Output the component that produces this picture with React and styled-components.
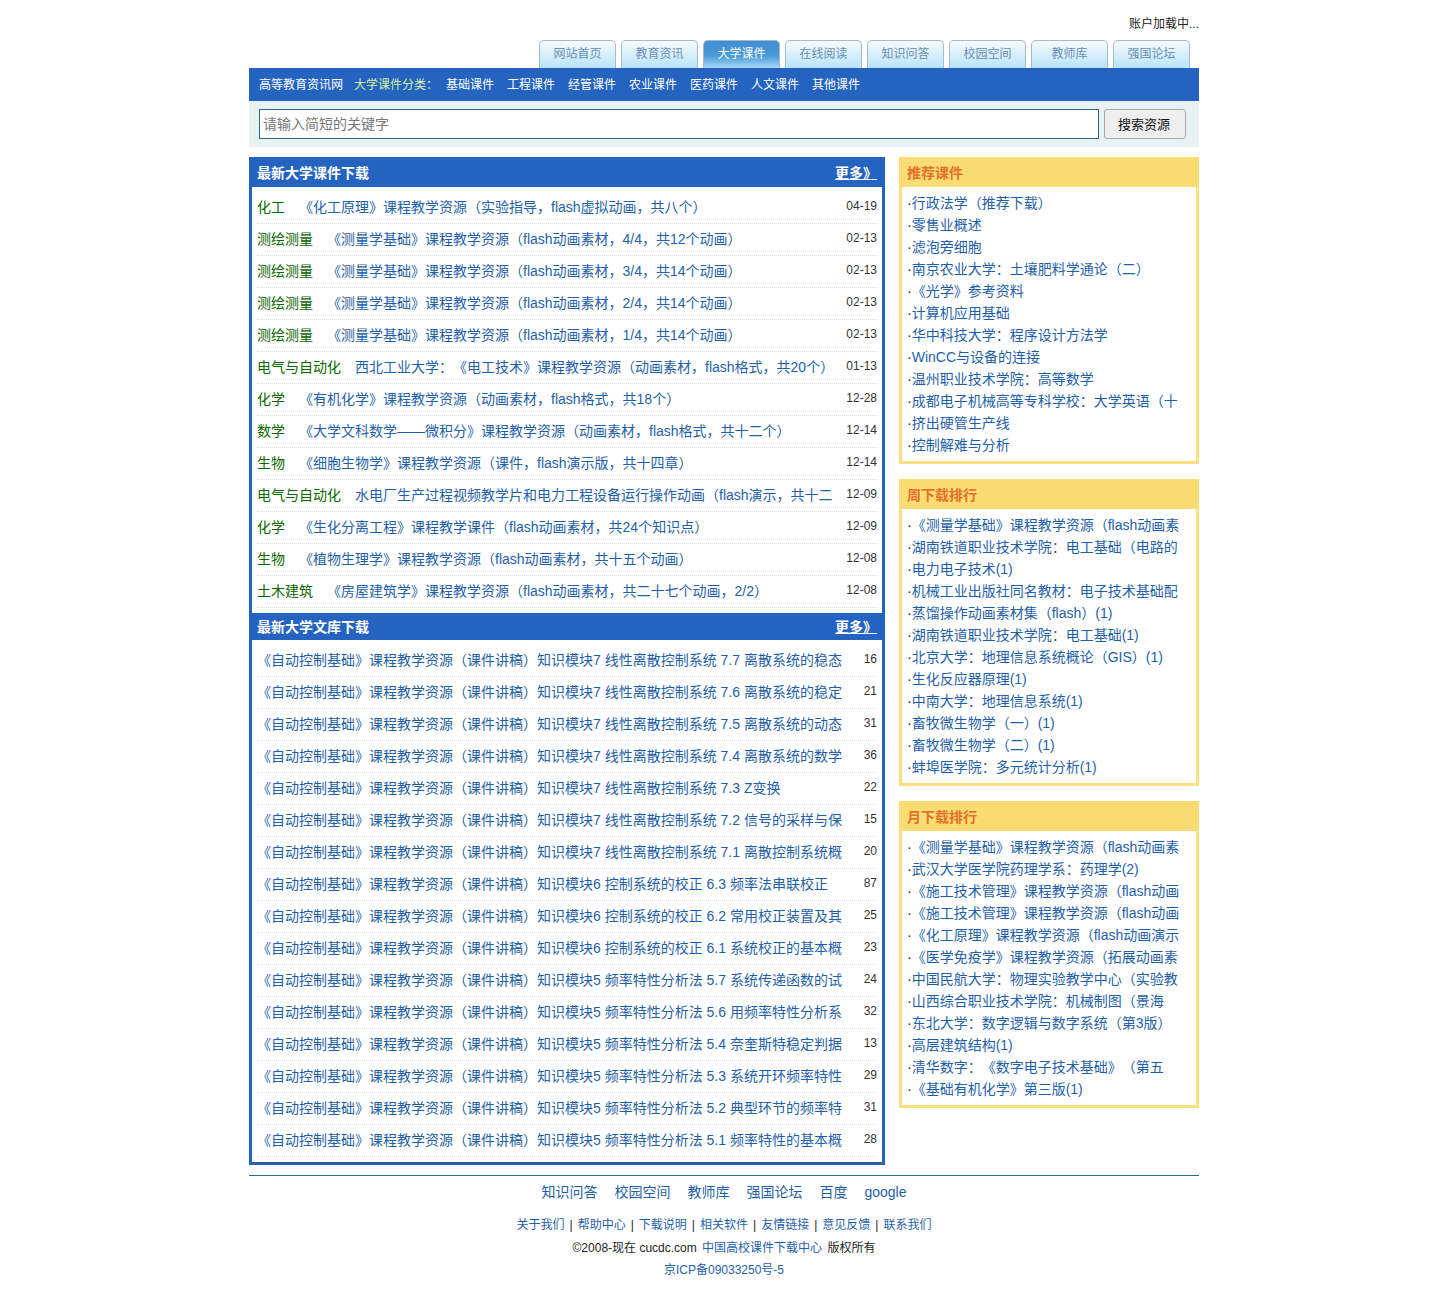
import React from "react";
import styled, { createGlobalStyle } from "styled-components";

//Styles
const GlobalStyle = createGlobalStyle`
	body {
		margin: 0;
		background: #fff;
		font-family: "Liberation Sans", "Noto Sans CJK SC", sans-serif;
		font-size: 12px;
		color: #222;
		text-spacing-trim: space-all;
	}
	a {
		color: #1f5fa8;
		text-decoration: none;
	}
`;

const Page = styled.div`
	width: 950px;
	height: 1297px;
	margin-left: 249px;
`;

const Account = styled.div`
	height: 40px;
	padding-top: 16px;
	box-sizing: border-box;
	line-height: 16px;
	text-align: right;
	color: #222;
`;

const Tabs = styled.div`
	display: flex;
	justify-content: flex-end;
	gap: 5px;
	height: 28px;
	padding-right: 9px;
`;

const Tab = styled.a`
	display: block;
	box-sizing: border-box;
	width: 77px;
	height: 28px;
	line-height: 26px;
	text-align: center;
	border: 1px solid #a3bccb;
	border-bottom: 0;
	border-radius: 5px 5px 0 0;
	color: ${(p) => (p.$active ? "#fff" : "#6b8fb0")};
	background: ${(p) =>
		p.$active
			? "linear-gradient(#3f8ed2 0%, #4a9ad8 55%, #a5daf5 100%)"
			: "linear-gradient(#f7fbfe, #b9e3f9)"};
`;

const NavBar = styled.div`
	display: flex;
	align-items: center;
	box-sizing: border-box;
	height: 33px;
	padding: 0 0 3px 10px;
	background: #2563c0;
	color: #fff;
`;

const SiteName = styled.span`
	width: 95px;
`;

const NavLabel = styled.span`
	width: 92px;
	color: #d8f0a8;
`;

const NavLink = styled.a`
	margin-right: 13px;
	color: #fff;
`;

const SearchBar = styled.div`
	display: flex;
	align-items: center;
	gap: 5px;
	height: 46px;
	padding: 0 13px 0 10px;
	background: #e9f2f2;
`;

const SearchInput = styled.input`
	flex: 1;
	box-sizing: border-box;
	height: 30px;
	padding: 0 3px;
	border: 1px solid #2f6488;
	border-radius: 0;
	background: #fff;
	font: 14px "Liberation Sans", "Noto Sans CJK SC", sans-serif;
	outline: none;
	&::placeholder {
		color: #777;
		opacity: 1;
	}
`;

const SearchButton = styled.button`
	width: 82px;
	height: 30px;
	padding: 0 2px 2px 0;
	border: 1px solid #aaa;
	border-radius: 3px;
	background: #efefef;
	color: #111;
	font: 13px "Liberation Sans", "Noto Sans CJK SC", sans-serif;
`;

const Columns = styled.div`
	display: flex;
	justify-content: space-between;
	align-items: flex-start;
	margin-top: 10px;
`;

const MainPanel = styled.div`
	box-sizing: border-box;
	width: 636px;
	height: 1008px;
	border: 3px solid #2563c0;
	border-top: 0;
	border-bottom-color: #2a62ac;
`;

const MainHead = styled.div`
	display: flex;
	justify-content: space-between;
	align-items: center;
	box-sizing: border-box;
	height: ${(p) => p.$height}px;
	margin: 0 -3px;
	padding: 0 8px ${(p) => (p.$height < 30 ? 2 : 0)}px;
	background: #2563c0;
	color: #fff;
	font-size: 14px;
	font-weight: bold;
`;

const More = styled.a`
	color: #fff;
	text-decoration: underline;
	font-size: 14px;
`;

const RowList = styled.ul`
	margin: 0;
	padding: 5px 5px 5px;
	list-style: none;
`;

const Row = styled.li`
	display: flex;
	align-items: center;
	box-sizing: border-box;
	height: 32px;
	padding-bottom: 4px;
	border-bottom: 1px dotted #ddd;
	font-size: 14px;
`;

const Subject = styled.a`
	margin-right: 14px;
	color: #0a6600;
	white-space: nowrap;
`;

const RowTitle = styled.a`
	flex: 1;
	white-space: nowrap;
	overflow: hidden;
`;

const RowMeta = styled.span`
	margin-left: 8px;
	font-size: 12px;
	color: #333;
	white-space: nowrap;
`;

const Sidebar = styled.div`
	display: flex;
	flex-direction: column;
	gap: 15px;
	width: 300px;
`;

const SideBox = styled.div`
	border: 3px solid #fbe083;
	border-top: 0;
	padding-bottom: 5px;
`;

const SideHead = styled.div`
	height: 30px;
	margin: 0 -3px;
	padding-left: 8px;
	line-height: 32px;
	background: #f9dc72;
	color: #e4702c;
	font-size: 14px;
	font-weight: bold;
`;

const SideList = styled.ul`
	margin: 0;
	padding: 5px 5px 0;
	list-style: none;
`;

const SideItem = styled.li`
	height: 22px;
	line-height: 22px;
	font-size: 14px;
	white-space: nowrap;
	overflow: hidden;
`;

const Footer = styled.div`
	margin-top: 10px;
	border-top: 1px solid #2f6a9c;
	text-align: center;
`;

const FooterLinks = styled.div`
	display: flex;
	justify-content: center;
	gap: 17px;
	padding-top: 8px;
	line-height: 16px;
	font-size: 14px;
`;

const FooterLine = styled.div`
	margin-top: ${(p) => p.$top}px;
	line-height: 16px;
	color: #222;
`;

const Separator = styled.span`
	margin: 0 5px;
`;

const OwnerLink = styled.a`
	margin: 0 2px;
`;

//Misc computation tasks
const tabs = ["网站首页", "教育资讯", "大学课件", "在线阅读", "知识问答", "校园空间", "教师库", "强国论坛"];
const categories = ["基础课件", "工程课件", "经管课件", "农业课件", "医药课件", "人文课件", "其他课件"];

const courses = [
	["化工", "《化工原理》课程教学资源（实验指导，flash虚拟动画，共八个）", "04-19"],
	["测绘测量", "《测量学基础》课程教学资源（flash动画素材，4/4，共12个动画）", "02-13"],
	["测绘测量", "《测量学基础》课程教学资源（flash动画素材，3/4，共14个动画）", "02-13"],
	["测绘测量", "《测量学基础》课程教学资源（flash动画素材，2/4，共14个动画）", "02-13"],
	["测绘测量", "《测量学基础》课程教学资源（flash动画素材，1/4，共14个动画）", "02-13"],
	["电气与自动化", "西北工业大学：《电工技术》课程教学资源（动画素材，flash格式，共20个）", "01-13"],
	["化学", "《有机化学》课程教学资源（动画素材，flash格式，共18个）", "12-28"],
	["数学", "《大学文科数学——微积分》课程教学资源（动画素材，flash格式，共十二个）", "12-14"],
	["生物", "《细胞生物学》课程教学资源（课件，flash演示版，共十四章）", "12-14"],
	["电气与自动化", "水电厂生产过程视频教学片和电力工程设备运行操作动画（flash演示，共十二", "12-09"],
	["化学", "《生化分离工程》课程教学课件（flash动画素材，共24个知识点）", "12-09"],
	["生物", "《植物生理学》课程教学资源（flash动画素材，共十五个动画）", "12-08"],
	["土木建筑", "《房屋建筑学》课程教学资源（flash动画素材，共二十七个动画，2/2）", "12-08"],
];

const docs = [
	["知识模块7 线性离散控制系统 7.7 离散系统的稳态", 16],
	["知识模块7 线性离散控制系统 7.6 离散系统的稳定", 21],
	["知识模块7 线性离散控制系统 7.5 离散系统的动态", 31],
	["知识模块7 线性离散控制系统 7.4 离散系统的数学", 36],
	["知识模块7 线性离散控制系统 7.3 Z变换", 22],
	["知识模块7 线性离散控制系统 7.2 信号的采样与保", 15],
	["知识模块7 线性离散控制系统 7.1 离散控制系统概", 20],
	["知识模块6 控制系统的校正 6.3 频率法串联校正", 87],
	["知识模块6 控制系统的校正 6.2 常用校正装置及其", 25],
	["知识模块6 控制系统的校正 6.1 系统校正的基本概", 23],
	["知识模块5 频率特性分析法 5.7 系统传递函数的试", 24],
	["知识模块5 频率特性分析法 5.6 用频率特性分析系", 32],
	["知识模块5 频率特性分析法 5.4 奈奎斯特稳定判据", 13],
	["知识模块5 频率特性分析法 5.3 系统开环频率特性", 29],
	["知识模块5 频率特性分析法 5.2 典型环节的频率特", 31],
	["知识模块5 频率特性分析法 5.1 频率特性的基本概", 28],
];

const sideBoxes = [
	{
		title: "推荐课件",
		items: ["行政法学（推荐下载）", "零售业概述", "滤泡旁细胞", "南京农业大学：土壤肥料学通论（二）", "《光学》参考资料", "计算机应用基础", "华中科技大学：程序设计方法学", "WinCC与设备的连接", "温州职业技术学院：高等数学", "成都电子机械高等专科学校：大学英语（十", "挤出硬管生产线", "控制解难与分析"],
	},
	{
		title: "周下载排行",
		items: ["《测量学基础》课程教学资源（flash动画素", "湖南铁道职业技术学院：电工基础（电路的", "电力电子技术(1)", "机械工业出版社同名教材：电子技术基础配", "蒸馏操作动画素材集（flash）(1)", "湖南铁道职业技术学院：电工基础(1)", "北京大学：地理信息系统概论（GIS）(1)", "生化反应器原理(1)", "中南大学：地理信息系统(1)", "畜牧微生物学（一）(1)", "畜牧微生物学（二）(1)", "蚌埠医学院：多元统计分析(1)"],
	},
	{
		title: "月下载排行",
		items: ["《测量学基础》课程教学资源（flash动画素", "武汉大学医学院药理学系：药理学(2)", "《施工技术管理》课程教学资源（flash动画", "《施工技术管理》课程教学资源（flash动画", "《化工原理》课程教学资源（flash动画演示", "《医学免疫学》课程教学资源（拓展动画素", "中国民航大学：物理实验教学中心（实验教", "山西综合职业技术学院：机械制图（景海", "东北大学：数字逻辑与数字系统（第3版）", "高层建筑结构(1)", "清华数字：《数字电子技术基础》（第五", "《基础有机化学》第三版(1)"],
	},
];

const footerLinks = ["知识问答", "校园空间", "教师库", "强国论坛", "百度", "google"];
const helpLinks = ["关于我们", "帮助中心", "下载说明", "相关软件", "友情链接", "意见反馈", "联系我们"];

//Start of Component Functionality
const App = () => {
	return (
		<Page>
			<GlobalStyle />
			<Account>账户加载中...</Account>
			<Tabs>
				{tabs.map((tab) => (
					<Tab key={tab} href="#" $active={tab === "大学课件"}>
						{tab}
					</Tab>
				))}
			</Tabs>
			<NavBar>
				<SiteName>高等教育资讯网</SiteName>
				<NavLabel>大学课件分类：</NavLabel>
				{categories.map((item) => (
					<NavLink key={item} href="#">
						{item}
					</NavLink>
				))}
			</NavBar>
			<SearchBar>
				<SearchInput placeholder="请输入简短的关键字" />
				<SearchButton>搜索资源</SearchButton>
			</SearchBar>

			<Columns>
				<MainPanel>
					<MainHead $height={30}>
						最新大学课件下载
						<More href="#">更多》 </More>
					</MainHead>
					<RowList>
						{courses.map(([subject, title, date], i) => (
							<Row key={i}>
								<Subject href="#">{subject}</Subject>
								<RowTitle href="#">{title}</RowTitle>
								<RowMeta>{date}</RowMeta>
							</Row>
						))}
					</RowList>
					<MainHead $height={27}>
						最新大学文库下载
						<More href="#">更多》 </More>
					</MainHead>
					<RowList>
						{docs.map(([title, count], i) => (
							<Row key={i}>
								<RowTitle href="#">《自动控制基础》课程教学资源（课件讲稿）{title}</RowTitle>
								<RowMeta>{count}</RowMeta>
							</Row>
						))}
					</RowList>
				</MainPanel>

				<Sidebar>
					{sideBoxes.map((box) => (
						<SideBox key={box.title}>
							<SideHead>{box.title}</SideHead>
							<SideList>
								{box.items.map((item, i) => (
									<SideItem key={i}>
										·<a href="#">{item}</a>
									</SideItem>
								))}
							</SideList>
						</SideBox>
					))}
				</Sidebar>
			</Columns>

			<Footer>
				<FooterLinks>
					{footerLinks.map((item) => (
						<a key={item} href="#">
							{item}
						</a>
					))}
				</FooterLinks>
				<FooterLine $top={17}>
					{helpLinks.map((item, i) => (
						<React.Fragment key={item}>
							{i > 0 && <Separator>|</Separator>}
							<a href="#">{item}</a>
						</React.Fragment>
					))}
				</FooterLine>
				<FooterLine $top={7}>
					©2008-现在 cucdc.com <OwnerLink href="#">中国高校课件下载中心</OwnerLink> 版权所有
				</FooterLine>
				<FooterLine $top={6}>
					<a href="#">京ICP备09033250号-5</a>
				</FooterLine>
			</Footer>
		</Page>
	);
};

export default App;
